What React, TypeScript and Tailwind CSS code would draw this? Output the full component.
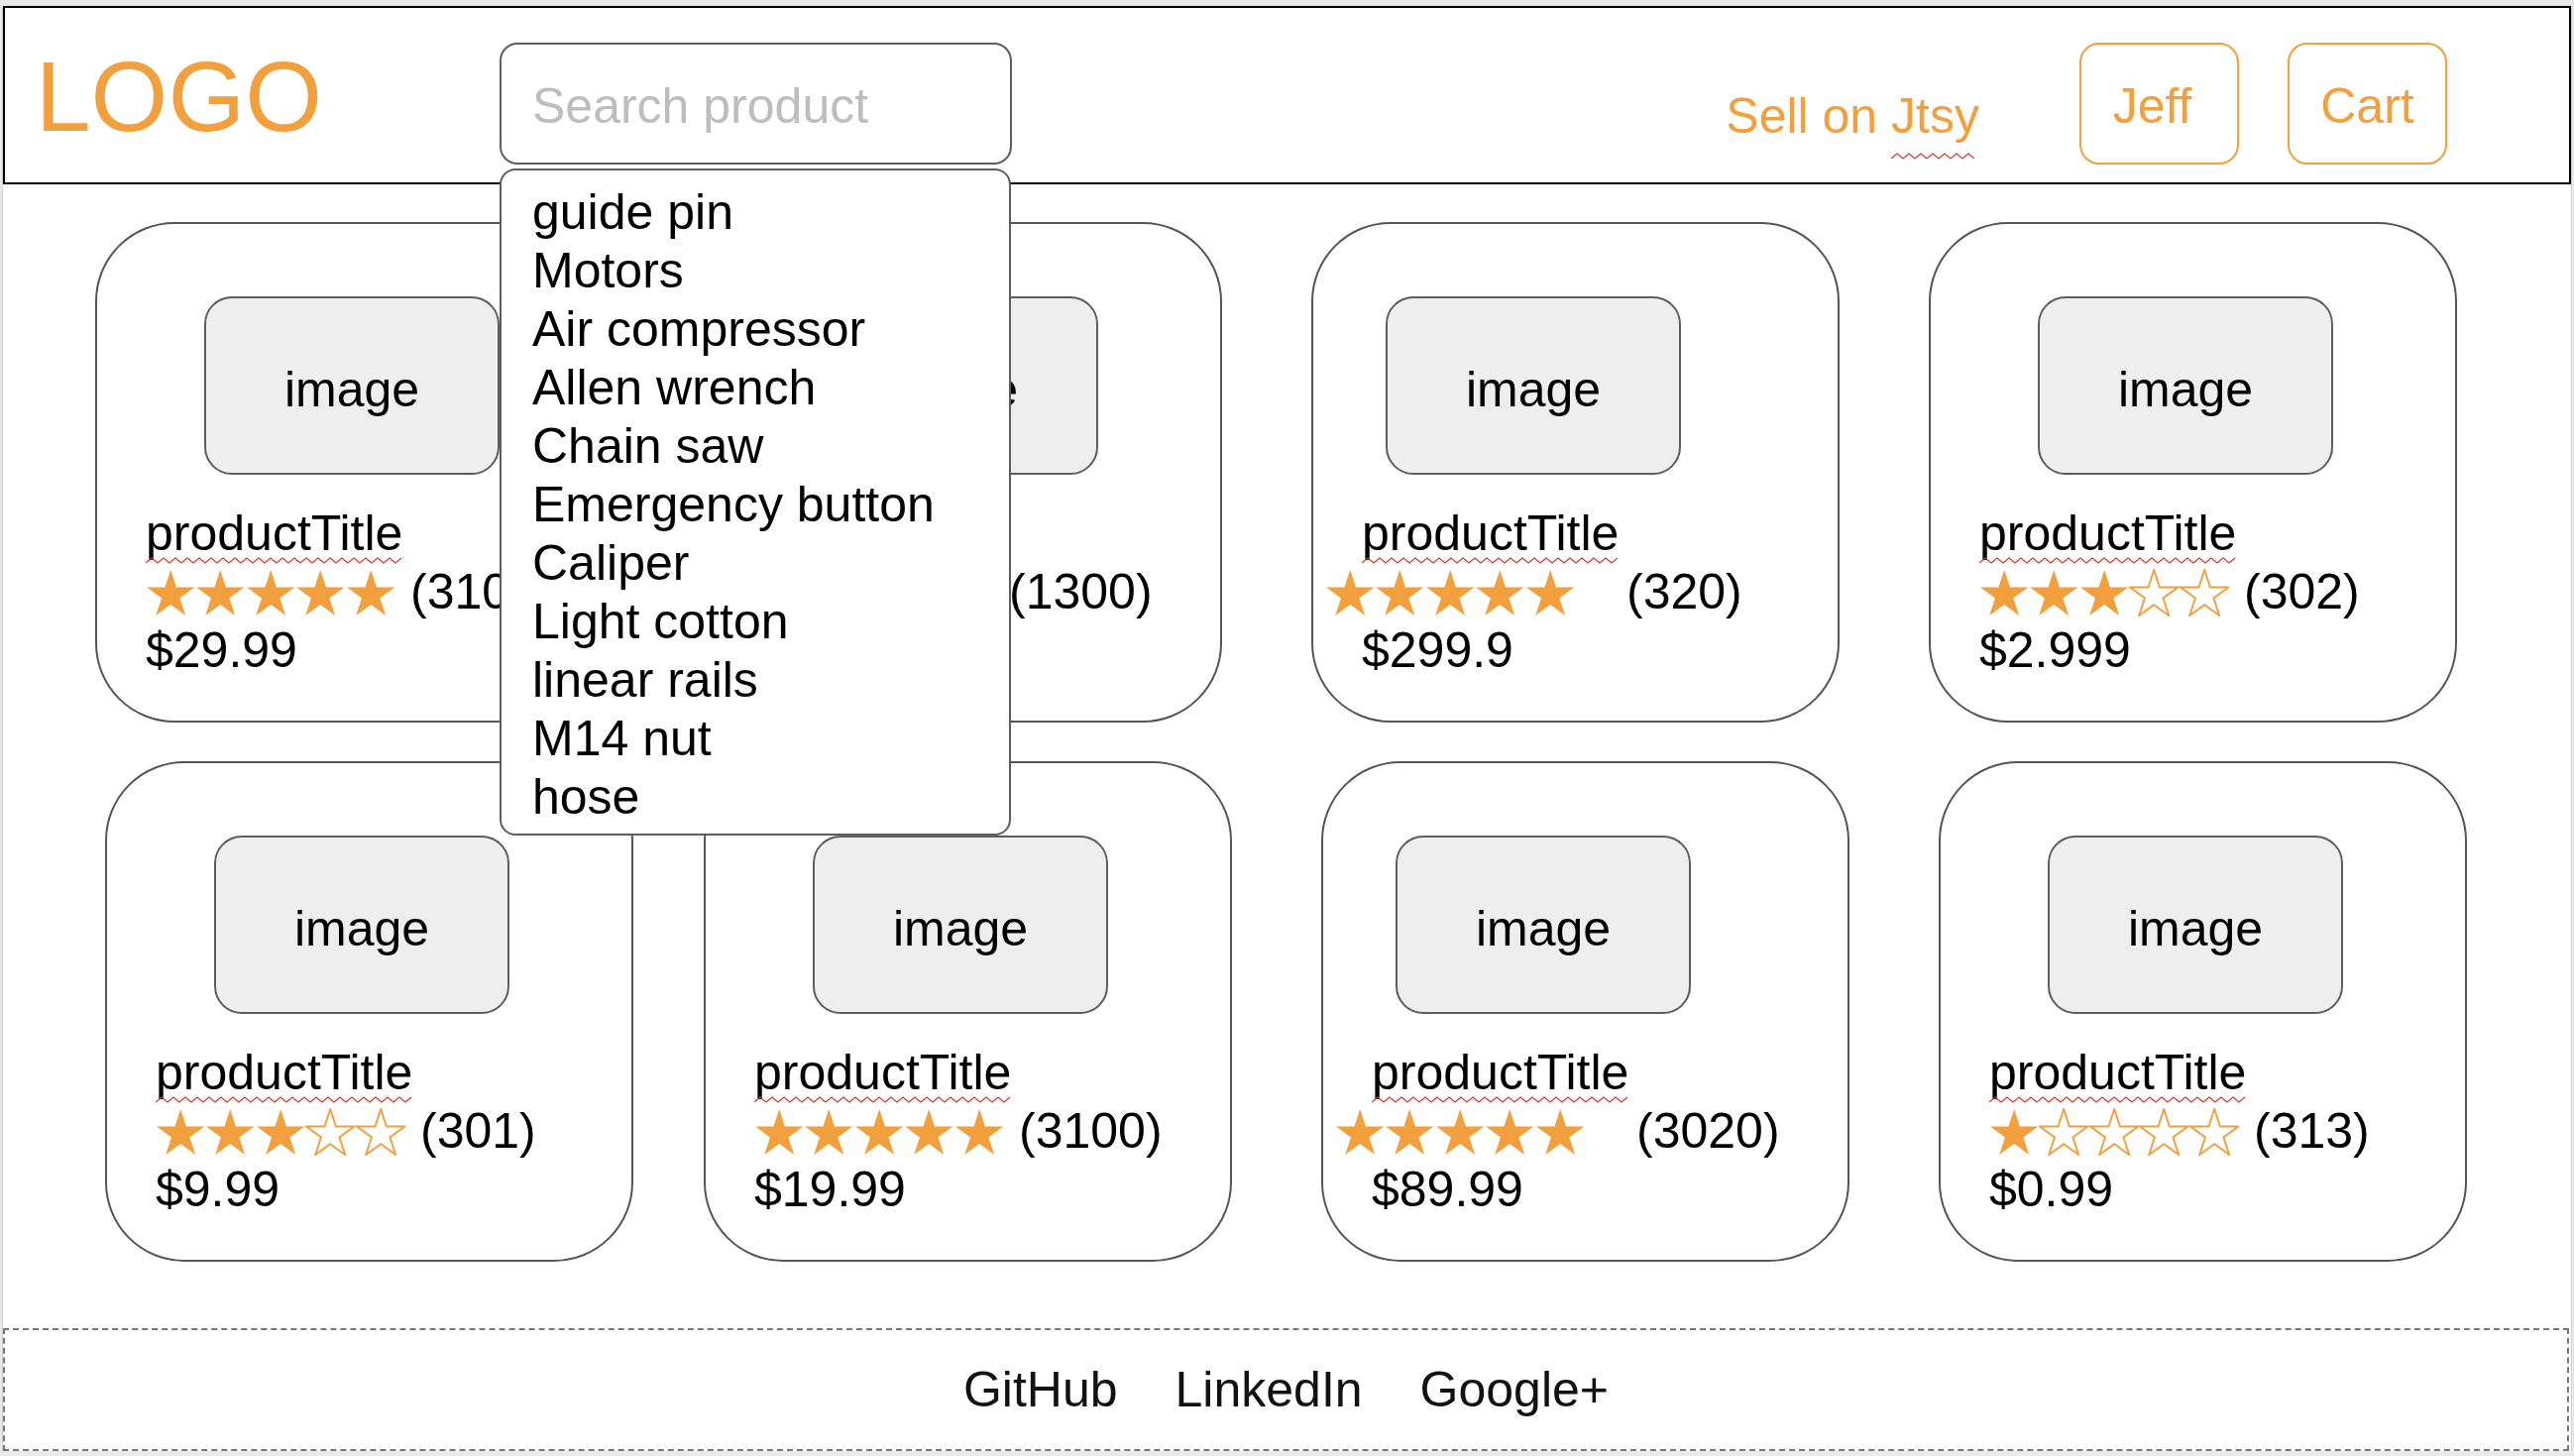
import React from "react";

type Product = {
    count: string;
    price: string;
    rating: number;
    alt?: boolean;
};

const rowOne: Product[] = [
    { count: "310", price: "$29.99", rating: 5 },
    { count: "1300", price: "$39.99", rating: 5 },
    { count: "320", price: "$299.9", rating: 5, alt: true },
    { count: "302", price: "$2.999", rating: 3 },
];

const rowTwo: Product[] = [
    { count: "301", price: "$9.99", rating: 3 },
    { count: "3100", price: "$19.99", rating: 5 },
    { count: "3020", price: "$89.99", rating: 5, alt: true },
    { count: "313", price: "$0.99", rating: 1 },
];

const suggestions = [
    "guide pin",
    "Motors",
    "Air compressor",
    "Allen wrench",
    "Chain saw",
    "Emergency button",
    "Caliper",
    "Light cotton",
    "linear rails",
    "M14 nut",
    "hose",
];

const cardGaps = ["", "ml-[71px]", "ml-[90px]", "ml-[90px]"];

const STAR_POINTS =
    "25.2,0 31.15,18.31 50.4,18.31 34.82,29.63 40.78,47.94 25.2,36.62 9.62,47.94 15.58,29.63 0,18.31 19.25,18.31";

function Star({ filled }: { filled: boolean }) {
    return (
        <svg width="50.4" height="48" viewBox="-1 -1 52.4 50" className="shrink-0">
            <polygon
                points={STAR_POINTS}
                fill={filled ? "#f29f3d" : "#ffffff"}
                stroke="#f29f3d"
                strokeWidth={filled ? 0 : 2}
            />
        </svg>
    );
}

// red spell-check zigzag under a word
function Squiggle({ width, className }: { width: number; className: string }) {
    const pts: string[] = [];
    for (let x = 0; x <= width; x += 6) pts.push(`${x},${(x / 6) % 2 === 0 ? 6 : 1}`);
    return (
        <svg className={`absolute left-0 ${className}`} width={width} height={7}>
            <polyline points={pts.join(" ")} fill="none" stroke="#d8342a" strokeWidth="1.2" />
        </svg>
    );
}

function Card({ p, className }: { p: Product; className: string }) {
    return (
        <div className={`w-[533px] h-[505px] shrink-0 rounded-[80px] border-2 border-[#555555] bg-white text-black ${className}`}>
            <div
                className={`mt-[73px] ${p.alt ? "ml-[73px]" : "ml-[108px]"} w-[298px] h-[180px] rounded-[28px] border-2 border-[#5e5e5e] bg-[#eeeeee] flex items-center justify-center pt-[8px] text-[50px]`}
            >
                image
            </div>
            <div className="mt-[30px] pl-[49px] text-[50px] leading-[59px]">
                <span className="relative inline-block">
                    productTitle
                    <Squiggle width={261} className="top-[53px]" />
                </span>
            </div>
            <div className="grid grid-cols-[316px_auto] items-center h-[59px] text-[50px] leading-[59px]">
                <div className={`flex ${p.alt ? "pl-[12px]" : "pl-[49px]"}`}>
                    {[0, 1, 2, 3, 4].map((i) => (
                        <Star key={i} filled={i < p.rating} />
                    ))}
                </div>
                <span>({p.count})</span>
            </div>
            <div className="pl-[49px] text-[50px] leading-[59px]">{p.price}</div>
        </div>
    );
}

export default function App() {
    return (
        <div className="w-full h-[1469px] bg-[#e9e9e9] pt-[6px] px-[2px] font-[family-name:'Liberation_Sans',Arial,sans-serif]">
            <div className="bg-white border-x border-[#cfcfcf]">
                <header className="relative z-10 flex items-start h-[180px] border-2 border-black bg-white">
                    <div className="w-[499px] shrink-0 pl-[31px] mt-[39px] text-[100px] leading-[100px] text-[#f29f3d]">
                        LOGO
                    </div>
                    <div className="relative mt-[35px] w-[517px] h-[123px] shrink-0">
                        <input
                            placeholder="Search product"
                            className="w-full h-full rounded-[18px] border-2 border-[#5f5f5f] bg-white pl-[31px] pt-[4px] text-[50px] text-black placeholder:text-[#bdbdbd] outline-none"
                        />
                        <ul className="absolute top-[127px] left-0 w-[516px] rounded-[16px] border-2 border-[#5e5e5e] bg-white pt-[13px] pb-[7px] pl-[31px] text-[50px] leading-[59px] text-black">
                            {suggestions.map((s) => (
                                <li key={s}>{s}</li>
                            ))}
                        </ul>
                    </div>
                    <div className="flex-1" />
                    <a href="#" className="mt-[80px] text-[50px] leading-[59px] text-[#f29f3d] whitespace-nowrap">
                        Sell on{" "}
                        <span className="relative inline-block">
                            Jtsy
                            <Squiggle width={89} className="top-[66px]" />
                        </span>
                    </a>
                    <button className="ml-[101px] mt-[35px] w-[161px] h-[123px] shrink-0 rounded-[20px] border-2 border-[#f29f3d] flex items-center justify-center pt-[6px] pr-[14px] text-[50px] leading-[59px] text-[#f29f3d]">
                        Jeff
                    </button>
                    <button className="ml-[49px] mr-[123px] mt-[35px] w-[161px] h-[123px] shrink-0 rounded-[20px] border-2 border-[#f29f3d] flex items-center justify-center pt-[6px] text-[50px] leading-[59px] text-[#f29f3d]">
                        Cart
                    </button>
                </header>

                <main className="flex flex-col">
                    <div className="flex mt-[38px] pl-[93px]">
                        {rowOne.map((p, i) => (
                            <Card key={i} p={p} className={cardGaps[i]} />
                        ))}
                    </div>
                    <div className="flex mt-[39px] pl-[103px]">
                        {rowTwo.map((p, i) => (
                            <Card key={i} p={p} className={cardGaps[i]} />
                        ))}
                    </div>
                </main>

                <footer className="mt-[67px] mr-[2px] h-[124px] border-2 border-dashed border-[#777777] flex items-center justify-center gap-[58px] text-[50px] leading-[59px] text-[#111111]">
                    <a href="#">GitHub</a>
                    <a href="#">LinkedIn</a>
                    <a href="#">Google+</a>
                </footer>
            </div>
        </div>
    );
}
